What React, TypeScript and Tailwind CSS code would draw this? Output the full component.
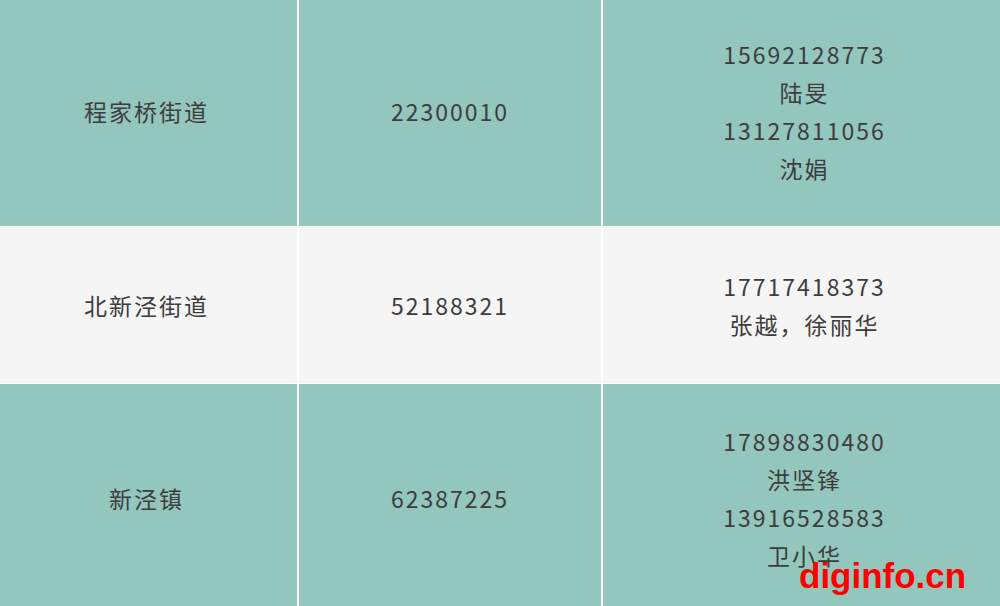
const rows = [
  { name: "程家桥街道", code: "22300010", contact: ["15692128773", "陆旻", "13127811056", "沈娟"], bg: "bg-[#93c6bc]", h: "h-[226px]", pad: "pb-[4px]" },
  { name: "北新泾街道", code: "52188321", contact: ["17717418373", "张越，徐丽华"], bg: "bg-[#f5f5f5]", h: "h-[156px]", pad: "" },
  { name: "新泾镇", code: "62387225", contact: ["17898830480", "洪坚锋", "13916528583", "卫小华"], bg: "bg-[#93c6bc]", h: "h-[228px]", pad: "" },
];

export default function App() {
  return (
    <div
      className="relative w-[1000px] h-[606px] overflow-hidden bg-white text-[#3d3d3d] text-[23px] leading-[38px] tracking-[2px]"
      style={{ fontFamily: '"Noto Sans CJK SC", "Noto Sans", sans-serif' }}
    >
      <div className="flex flex-col gap-[1px] bg-white">
        {rows.map((r) => (
          <div key={r.code} className={`flex gap-[2px] ${r.h}`}>
            <div className={`w-[297px] ${r.bg} ${r.pad} flex items-center justify-center pr-[4px]`}>{r.name}</div>
            <div className={`w-[302px] ${r.bg} ${r.pad} flex items-center justify-center`}>{r.code}</div>
            <div className={`flex-1 ${r.bg} ${r.pad} flex flex-col items-center justify-center pl-[6px]`}>
              {r.contact.map((c) => (
                <div key={c}>{c}</div>
              ))}
            </div>
          </div>
        ))}
      </div>
      <div
        className="absolute left-[799px] top-[556px] text-[35px] leading-[40px] font-black tracking-normal text-[#ff0000]"
        style={{ fontFamily: '"Liberation Sans", Arial, sans-serif' }}
      >
        diginfo.cn
      </div>
    </div>
  );
}
